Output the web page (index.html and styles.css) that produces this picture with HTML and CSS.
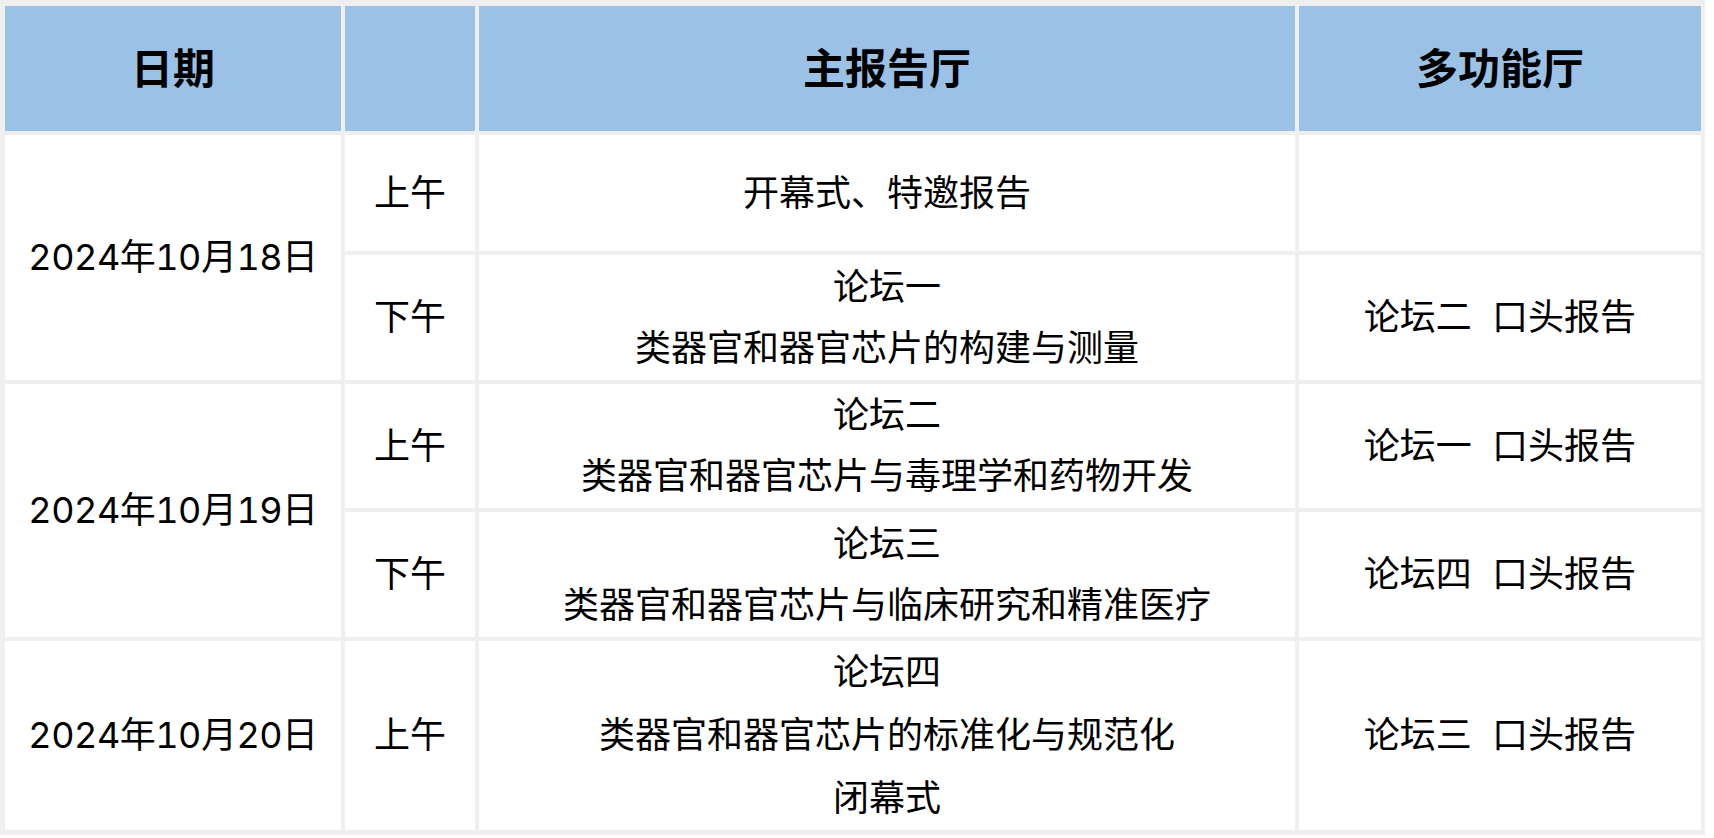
FILE: index.html
```html
<!DOCTYPE html>
<html lang="zh-CN">
<head>
<meta charset="utf-8">
<title>会议日程</title>
<link rel="stylesheet" href="styles.css">
</head>
<body>
<table class="schedule">
  <colgroup>
    <col class="c-date">
    <col class="c-time">
    <col class="c-main">
    <col class="c-multi">
  </colgroup>
  <thead>
    <tr class="h-head">
      <th>日期</th>
      <th></th>
      <th>主报告厅</th>
      <th>多功能厅</th>
    </tr>
  </thead>
  <tbody>
    <tr class="h-116">
      <td class="date" rowspan="2">2024年10月18日</td>
      <td>上午</td>
      <td>开幕式、特邀报告</td>
      <td></td>
    </tr>
    <tr class="h-125">
      <td>下午</td>
      <td>论坛一<br>类器官和器官芯片的构建与测量</td>
      <td>论坛二&nbsp;&nbsp;口头报告</td>
    </tr>
    <tr class="h-124">
      <td class="date" rowspan="2">2024年10月19日</td>
      <td>上午</td>
      <td>论坛二<br>类器官和器官芯片与毒理学和药物开发</td>
      <td>论坛一&nbsp;&nbsp;口头报告</td>
    </tr>
    <tr class="h-125">
      <td>下午</td>
      <td>论坛三<br>类器官和器官芯片与临床研究和精准医疗</td>
      <td>论坛四&nbsp;&nbsp;口头报告</td>
    </tr>
    <tr class="h-186">
      <td class="date">2024年10月20日</td>
      <td>上午</td>
      <td class="tall">论坛四<br>类器官和器官芯片的标准化与规范化<br>闭幕式</td>
      <td>论坛三&nbsp;&nbsp;口头报告</td>
    </tr>
  </tbody>
</table>
</body>
</html>
```

FILE: styles.css
```css
html, body {
  margin: 0;
  padding: 0;
  background: #ffffff;
}

body {
  font-family: "Inter", "Noto Sans CJK SC", sans-serif;
  color: #000000;
}

.schedule {
  table-layout: fixed;
  width: 1705px;
  border-collapse: separate;
  border-spacing: 4px;
  padding: 2px 0 1px 1px;
  background: #efefef;
}

.c-date { width: 336px; }
.c-time { width: 130px; }
.c-main { width: 816px; }
.c-multi { width: 402px; }

.schedule th,
.schedule td {
  padding: 0;
  text-align: center;
  vertical-align: middle;
}

.schedule th {
  background: #9bc2e6;
  font-size: 42px;
  font-weight: 700;
  line-height: 60px;
}

.schedule td {
  background: #ffffff;
  font-size: 36px;
  font-weight: 400;
  line-height: 61px;
}

.schedule td.date {
  font-feature-settings: "tnum" 1;
  letter-spacing: -0.5px;
}

.schedule td.tall {
  line-height: 63px;
}

.h-head { height: 125px; }
.h-116 { height: 116px; }
.h-124 { height: 124px; }
.h-125 { height: 125px; }
.h-186 { height: 186px; }
```
